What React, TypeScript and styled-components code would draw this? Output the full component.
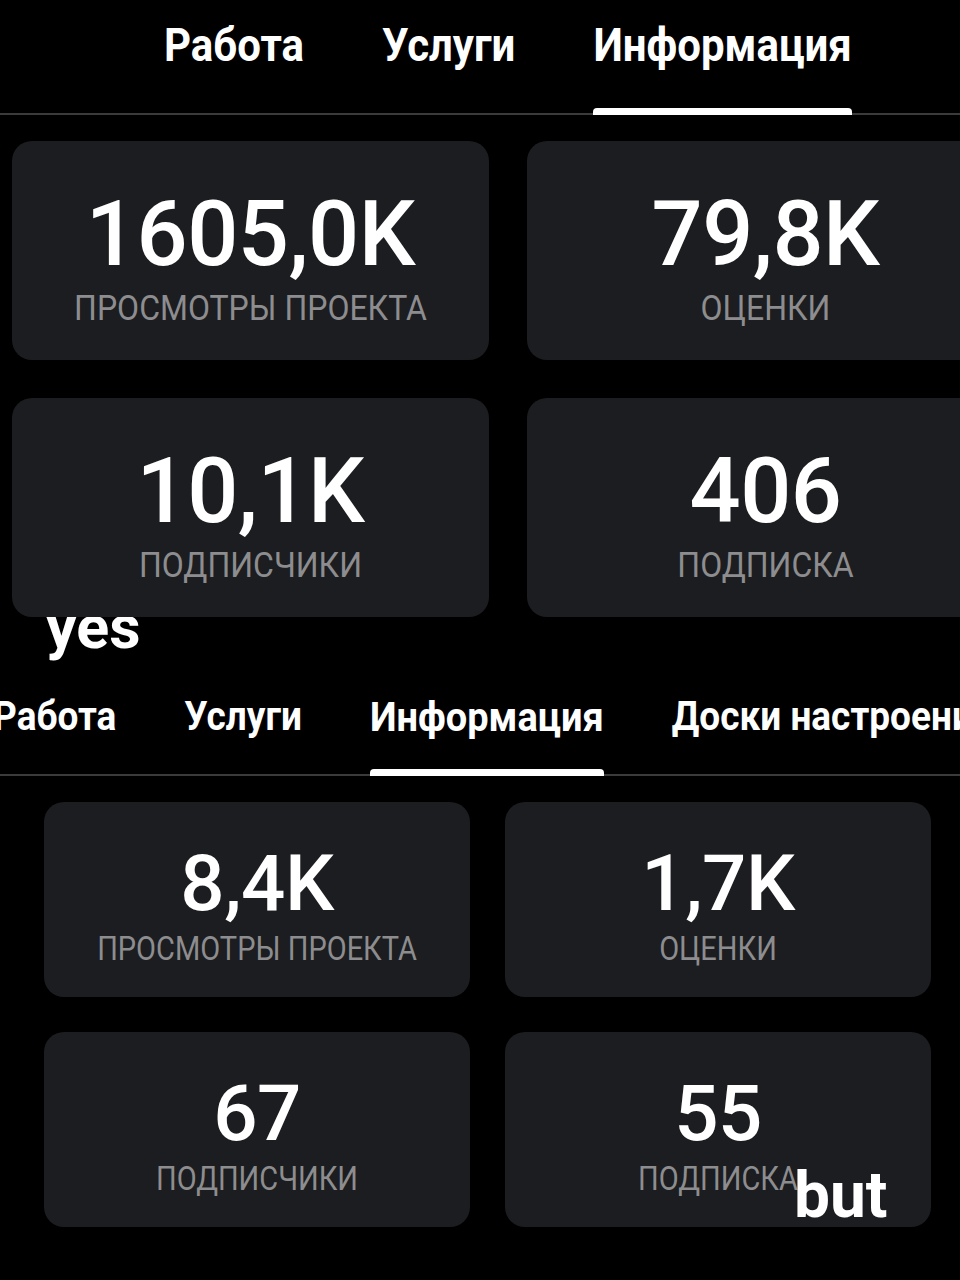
import React from "react";
import styled, { createGlobalStyle } from "styled-components";

const Global = createGlobalStyle`
  html, body { margin: 0; padding: 0; background: #000; }
  body { font-family: Roboto, "Noto Sans", "Liberation Sans", sans-serif; overflow: hidden; }
  * { box-sizing: border-box; }
`;

const Page = styled.div`
  width: 960px;
  height: 1280px;
  overflow: hidden;
  background: #000;
  position: relative;
  display: flex;
  flex-direction: column;
`;

const Section = styled.section`
  display: flex;
  flex-direction: column;
`;

const TabBar = styled.nav<{ $height: number }>`
  display: flex;
  align-items: center;
  height: ${(p) => p.$height}px;
  border-bottom: 2px solid #3b3b3d;
  white-space: nowrap;
  width: 960px;
`;

const TabsTrack = styled.div<{ $pad: number; $gap: number }>`
  display: flex;
  height: 100%;
  margin-left: ${(p) => p.$pad}px;
  gap: ${(p) => p.$gap}px;
`;

const Tab = styled.div<{ $size: number; $active?: boolean; $pull: number; $stretch: number }>`
  position: relative;
  height: 100%;
  display: flex;
  align-items: center;
  padding-bottom: ${(p) => p.$pull}px;
  color: #fff;
  font-weight: 700;
  font-size: ${(p) => p.$size}px;
  flex-shrink: 0;
  & > span {
    display: inline-block;
    transform: scaleY(${(p) => p.$stretch});
  }
  &::after {
    content: "";
    display: ${(p) => (p.$active ? "block" : "none")};
    position: absolute;
    left: 0;
    right: 0;
    bottom: -2px;
    height: 7px;
    border-radius: 4px 4px 0 0;
    background: #fff;
  }
`;

const Grid = styled.div<{ $left: number; $top: number; $col: number; $row: number; $gap: number; $rgap: number }>`
  display: grid;
  grid-template-columns: ${(p) => p.$col}px ${(p) => p.$col}px;
  grid-auto-rows: ${(p) => p.$row}px;
  column-gap: ${(p) => p.$gap}px;
  row-gap: ${(p) => p.$rgap}px;
  padding-left: ${(p) => p.$left}px;
  padding-top: ${(p) => p.$top}px;
`;

const Card = styled.div<{ $shift: number }>`
  position: relative;
  background: #1c1d20;
  border-radius: 20px;
  display: flex;
  flex-direction: column;
  align-items: center;
  justify-content: center;
  padding-top: ${(p) => p.$shift}px;
`;

const Value = styled.div<{ $size: number }>`
  color: #fff;
  font-weight: 500;
  font-size: ${(p) => p.$size}px;
  line-height: 1;
  letter-spacing: -0.5px;
`;

const Label = styled.div<{ $size: number; $gap: number }>`
  color: #8d8d8f;
  font-weight: 400;
  font-size: ${(p) => p.$size}px;
  line-height: 1;
  margin-top: ${(p) => p.$gap}px;
  transform: scaleY(1.12);
  white-space: nowrap;
`;

const Caption = styled.div`
  height: 78px;
  padding-left: 46px;
  color: #fff;
  font-weight: 700;
  font-size: 61px;
  line-height: 1;
  margin-top: -20px;
`;

const Overlay = styled.div`
  position: absolute;
  left: 794px;
  top: 1164px;
  color: #fff;
  font-weight: 700;
  font-size: 64px;
  line-height: 1;
`;

type Stat = { value: string; label: string };

const top: Stat[] = [
  { value: "1605,0K", label: "ПРОСМОТРЫ ПРОЕКТА" },
  { value: "79,8K", label: "ОЦЕНКИ" },
  { value: "10,1K", label: "ПОДПИСЧИКИ" },
  { value: "406", label: "ПОДПИСКА" },
];

const bottom: Stat[] = [
  { value: "8,4K", label: "ПРОСМОТРЫ ПРОЕКТА" },
  { value: "1,7K", label: "ОЦЕНКИ" },
  { value: "67", label: "ПОДПИСЧИКИ" },
  { value: "55", label: "ПОДПИСКА" },
];

export default function App() {
  return (
    <>
      <Global />
      <Page>
        <Section>
          <TabBar $height={115}>
            <TabsTrack $pad={164} $gap={78}>
              <Tab $size={42} $pull={22} $stretch={1.1}><span>Работа</span></Tab>
              <Tab $size={42} $pull={22} $stretch={1.1}><span>Услуги</span></Tab>
              <Tab $size={42} $pull={22} $stretch={1.1} $active><span>Информация</span></Tab>
            </TabsTrack>
          </TabBar>
          <Grid $left={12} $top={26} $col={477} $row={219} $gap={38} $rgap={38}>
            {top.map((s) => (
              <Card key={s.label} $shift={12}>
                <Value $size={90}>{s.value}</Value>
                <Label $size={32} $gap={12}>{s.label}</Label>
              </Card>
            ))}
          </Grid>
        </Section>
        <Caption>yes</Caption>
        <Section>
          <TabBar $height={101}>
            <TabsTrack $pad={-7} $gap={68}>
              <Tab $size={37} $pull={16} $stretch={1.08}><span>Работа</span></Tab>
              <Tab $size={37} $pull={16} $stretch={1.08}><span>Услуги</span></Tab>
              <Tab $size={38} $pull={16} $stretch={1.08} $active><span>Информация</span></Tab>
              <Tab $size={37} $pull={16} $stretch={1.08}><span>Доски настроения</span></Tab>
            </TabsTrack>
          </TabBar>
          <Grid $left={44} $top={26} $col={426} $row={195} $gap={35} $rgap={35}>
            {bottom.map((s) => (
              <Card key={s.label} $shift={10}>
                <Value $size={78}>{s.value}</Value>
                <Label $size={29} $gap={12}>{s.label}</Label>
              </Card>
            ))}
          </Grid>
        </Section>
        <Overlay>but</Overlay>
      </Page>
    </>
  );
}
